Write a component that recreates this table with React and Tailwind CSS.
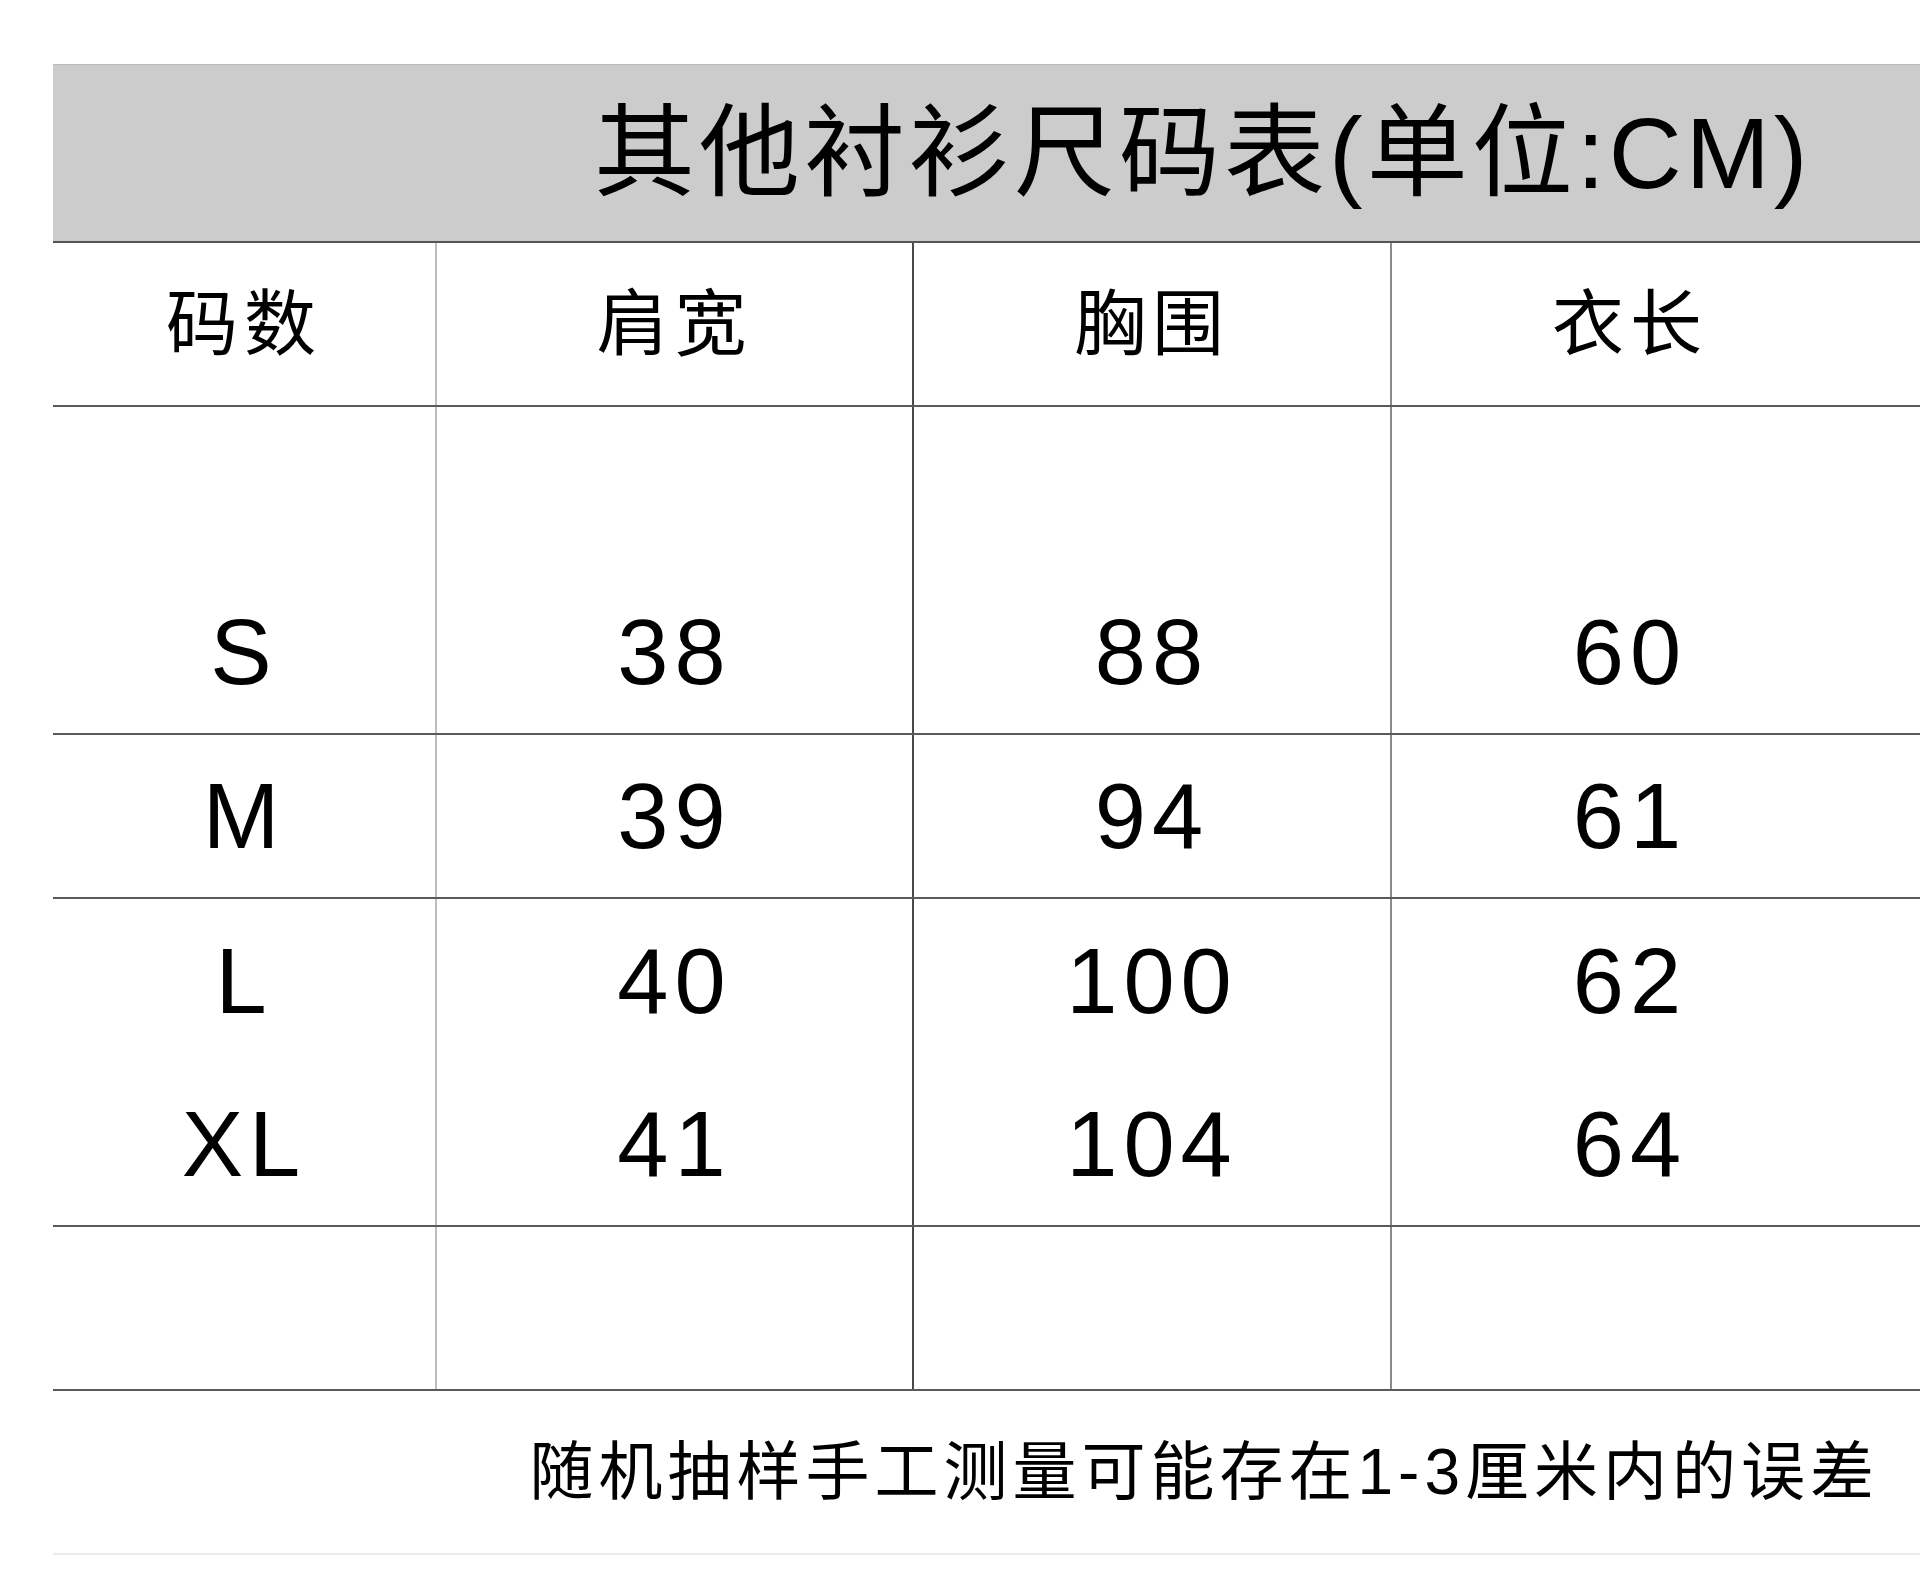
import React from 'react';

const rows = [
  { cells: ['码数', '肩宽', '胸围', '衣长'], line: true, head: true },
  { cells: ['', '', '', ''], line: false },
  { cells: ['S', '38', '88', '60'], line: true },
  { cells: ['M', '39', '94', '61'], line: true },
  { cells: ['L', '40', '100', '62'], line: false },
  { cells: ['XL', '41', '104', '64'], line: true },
  { cells: ['', '', '', ''], line: true },
];

// left border colour per column, as in the scan
const colBorder = ['', 'border-l-2 border-[#bdbdbd]', 'border-l-2 border-[#4a4a4a]', 'border-l-2 border-[#8a8a8a]'];

const Row = ({ cells, line, head }) => (
  <div
    className={`grid grid-cols-[382px_477px_478px_478px_1fr] h-[164px] ${line ? 'border-b-2 border-[#5a5a5a]' : ''}`}
  >
    {cells.map((c, i) => (
      <div
        key={i}
        className={`flex items-center justify-center ${colBorder[i]} ${
          head ? 'text-[72px] tracking-[6px]' : 'text-[92px] tracking-[6px]'
        }`}
      >
        {c}
      </div>
    ))}
    <div />
  </div>
);

const App = () => {
  return (
    <div className="w-[1920px] h-[1595px] bg-white pt-[64px] pl-[53px] text-black font-['Liberation_Sans','Noto_Sans_CJK_SC',sans-serif] overflow-hidden">
      <div className="h-[179px] bg-[#cccccc] border-b-2 border-[#555555] border-t border-t-[#bbbbbb] flex items-center pl-[541px]">
        <span className="text-[101px] leading-none tracking-[4px] whitespace-nowrap">其他衬衫尺码表(单位:CM)</span>
      </div>
      {rows.map((r, i) => (
        <Row key={i} {...r} />
      ))}
      <div className="h-[164px] border-b-2 border-[#ececec] flex items-center justify-end pr-[41px]">
        <span className="text-[64px] tracking-[5px] whitespace-nowrap">随机抽样手工测量可能存在1-3厘米内的误差</span>
      </div>
    </div>
  );
};

export default App;
